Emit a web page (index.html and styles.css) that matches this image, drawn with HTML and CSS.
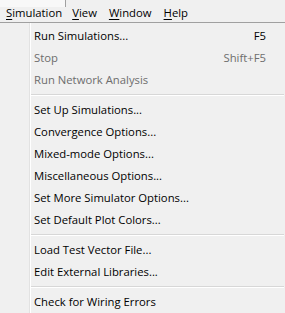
FILE: index.html
```html
<!DOCTYPE html>
<html lang="en">
<head>
    <meta charset="UTF-8">
    <title>Simulation Menu</title>
    <link rel="stylesheet" href="styles.css">
</head>
<body>
    <div class="menubar">
        <span class="top-item open"><u>S</u>imulation</span>
        <span class="top-item"><u>V</u>iew</span>
        <span class="top-item"><u>W</u>indow</span>
        <span class="top-item"><u>H</u>elp</span>
    </div>

    <div class="dropdown">
        <div class="item"><span>Run Simulations...</span><span class="key">F5</span></div>
        <div class="item disabled"><span>Stop</span><span class="key">Shift+F5</span></div>
        <div class="item disabled"><span>Run Network Analysis</span></div>
        <div class="sep"></div>
        <div class="item"><span>Set Up Simulations...</span></div>
        <div class="item"><span>Convergence Options...</span></div>
        <div class="item"><span>Mixed-mode Options...</span></div>
        <div class="item"><span>Miscellaneous Options...</span></div>
        <div class="item"><span>Set More Simulator Options...</span></div>
        <div class="item"><span>Set Default Plot Colors...</span></div>
        <div class="sep"></div>
        <div class="item"><span>Load Test Vector File...</span></div>
        <div class="item"><span>Edit External Libraries...</span></div>
        <div class="sep"></div>
        <div class="item"><span>Check for Wiring Errors</span></div>
    </div>
</body>
</html>
```

FILE: styles.css
```css
body {
    margin: 0;
    background: #f0f0f0;
    font-family: "Open Sans", sans-serif;
    font-size: 11.3px;
    color: #000;
    width: 285px;
    height: 313px;
    overflow: hidden;
}
.menubar {
    display: flex;
    height: 23px;
    border-bottom: 1px solid #a0a0a0;
    box-sizing: border-box;
}
.top-item {
    padding: 4px 6px 0 6px;
    line-height: 18px;
}
.top-item.open {
    padding-left: 6px;
    padding-right: 4px;
    background:
        linear-gradient(#a0a0a0, #a0a0a0) right top / 1px 7px no-repeat,
        linear-gradient(#f8f8f8, #f8f8f8) left top / 100% 7px no-repeat;
}
.top-item u {
    text-decoration-thickness: 1px;
    text-underline-offset: 2px;
}
.dropdown {
    padding-top: 2px;
    background: linear-gradient(to right, #f0f0f0 29px, #e2e2e2 29px, #e2e2e2 30px, #fff 30px, #fff 31px, #f0f0f0 31px);
}
.item {
    display: flex;
    justify-content: space-between;
    height: 22px;
    line-height: 22px;
    padding: 0 19px 0 34px;
}
.item.disabled {
    color: #6d6d6d;
}
.sep {
    height: 8px;
    margin-left: 31px;
    margin-right: 1px;
    background: linear-gradient(#f0f0f0 3px, #d7d7d7 3px, #d7d7d7 4px, #fff 4px, #fff 5px, #f0f0f0 5px);
}
```
